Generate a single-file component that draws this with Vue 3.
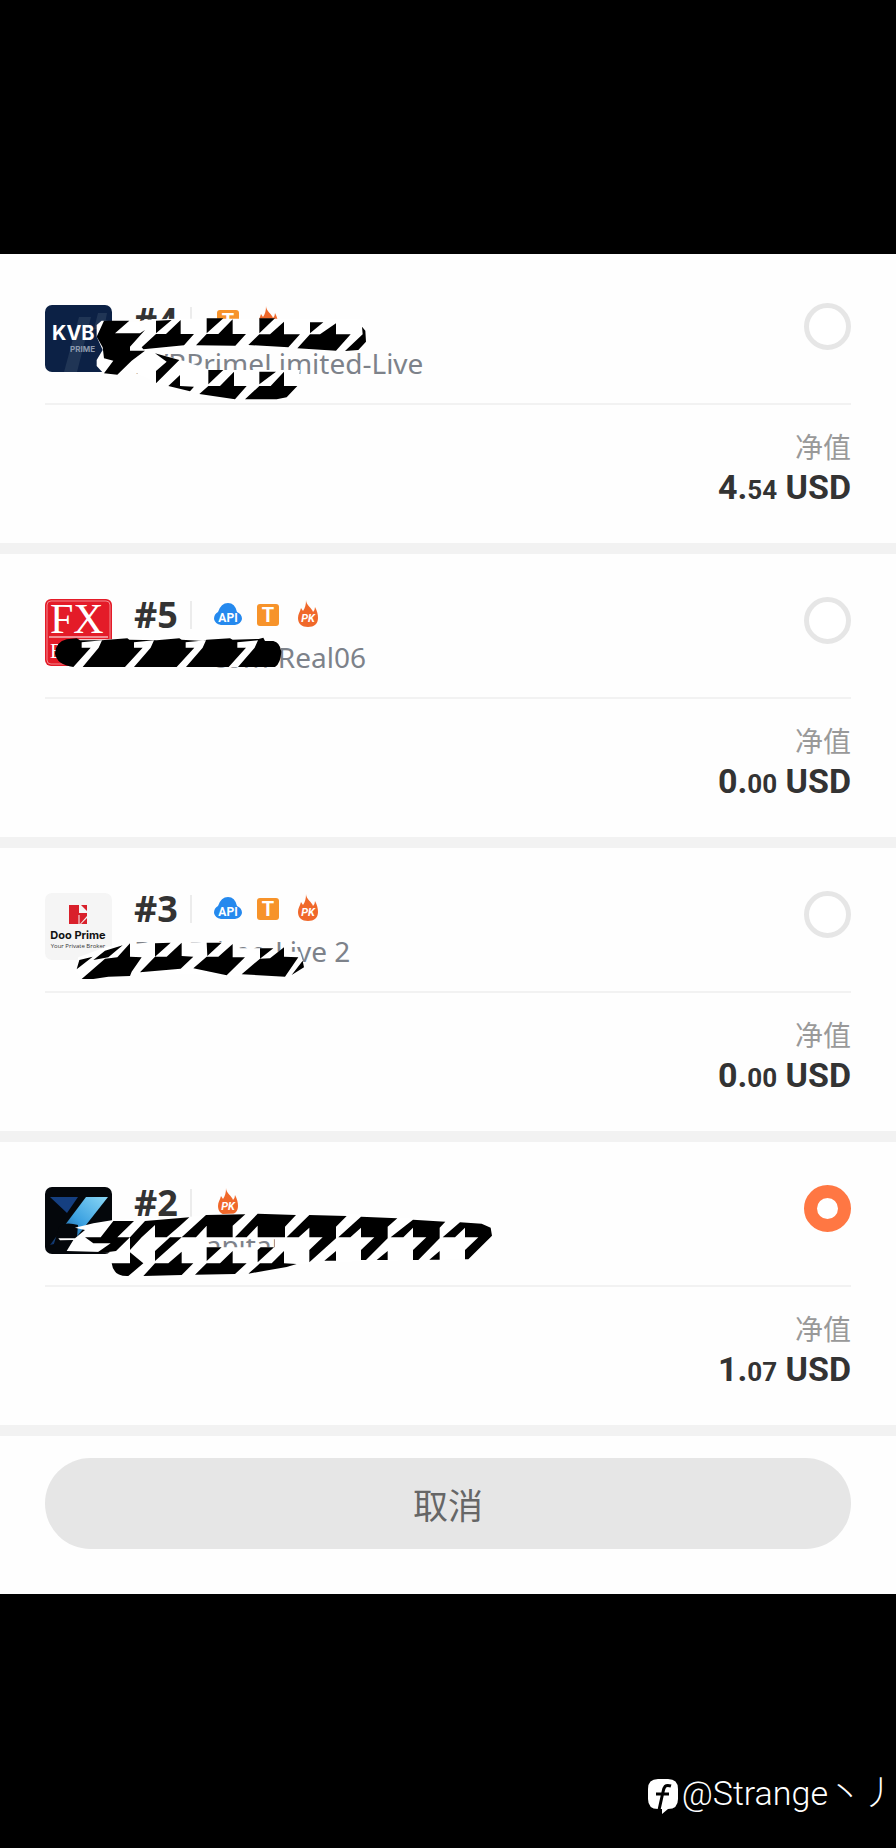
<script setup>
import { ref } from 'vue'

const selected = ref(2)

const accounts = [
  {
    id: 4, logo: 'kvb', server: 'KVBPrimeLimited-Live', tags: ['t', 'pk'], whole: '4', cents: '54', shift: 0,
    mask: 'M215 92 L320 96 L345 89 L435 86 L1000 86 L1010 150 L980 184 L640 174 L500 168 L345 180 L470 215 L540 240 L810 240 L800 300 L760 330 L600 328 L480 305 L380 278 L300 240 L265 250 L220 250 L200 228 L200 210 L218 180 L200 140 L200 105 Z',
    ink: 'M222 92 L298 92 L255 130 L330 130 L345 120 L300 170 L300 182 L345 182 L305 212 L262 254 L222 250 L250 212 L222 205 L218 172 L200 140 Z M378 92 L425 90 L378 130 Z M378 132 L408 132 L452 90 L452 132 L492 132 L462 166 L340 178 L335 172 L378 132 Z M530 85 L580 85 L530 130 Z M530 132 L565 132 L608 88 L608 132 L648 132 L616 167 L498 166 Z M688 85 L735 85 L688 130 Z M688 133 L720 133 L762 95 L762 133 L810 133 L775 172 L655 165 Z M840 97 L880 97 L840 130 Z M840 133 L870 133 L918 100 L918 133 L962 133 L918 182 L802 175 Z M996 110 L1006 122 L1008 155 L985 180 L945 183 L998 133 Z M375 190 L448 210 L400 258 L378 280 L378 243 L410 215 Z M415 288 L450 255 L450 288 L492 290 L480 304 Z M535 240 L580 240 L535 283 Z M535 288 L570 288 L612 245 L612 288 L650 288 L615 328 L508 312 Z M688 245 L738 245 L688 283 Z M688 288 L722 288 L762 245 L762 288 L802 288 L770 322 L740 328 L645 328 Z'
  },
  {
    id: 5, logo: 'fx', server: 'com-Real06', tags: ['api', 't', 'pk'], whole: '0', cents: '00', shift: 3,
    mask: 'M145 163 H690 Q750 165 753 195 Q750 240 735 247 H130 Z',
    ink: 'M110 163 Q78 170 75 205 Q80 240 130 246 H735 Q752 235 754 200 Q750 172 730 168 L705 168 L700 158 L686 162 L608 164 L600 160 L530 164 L520 168 L455 164 L448 160 L380 166 L298 164 L292 160 L215 166 L150 166 L140 160 Z',
    cuts: 'M155 172 L216 166 L206 188 L158 246 L130 246 L182 188 H155 Z M312 172 L372 166 L362 188 L312 246 L285 246 L338 188 H312 Z M467 172 L528 166 L518 188 L468 246 L440 246 L493 188 H467 Z M622 172 L684 166 L674 188 L624 246 L596 246 L648 188 H622 Z'
  },
  {
    id: 3, logo: 'doo', server: 'DooPrime-Live 2', tags: ['api', 't', 'pk'], whole: '0', cents: '00', shift: 6,
    mask: 'M135 270 L145 232 L230 200 L345 188 L600 186 L630 205 L710 205 L740 215 L810 215 L824 260 L790 286 L600 287 L380 278 L160 298 Z',
    ink: 'M140 268 L148 240 L188 230 Z M155 297 L225 236 L262 232 L300 190 L300 230 L335 232 L305 275 L300 288 L235 290 L190 297 Z M225 212 L278 196 L235 232 L190 240 Z M375 190 L422 188 L375 230 Z M375 230 L410 230 L455 188 L455 228 L490 230 L452 266 L330 277 Z M530 188 L575 188 L532 228 Z M530 230 L565 230 L608 192 L608 232 L645 232 L590 286 L490 265 Z M690 205 L730 205 L690 236 Z M690 236 L720 235 L762 202 L762 230 L805 232 L765 290 L635 283 Z M818 242 L822 262 L785 285 Z'
  },
  {
    id: 2, logo: 'capital', server: 'Capital', tags: ['pk'], whole: '1', cents: '07', shift: 9,
    mask: 'M85 190 L135 190 L165 165 L135 158 L190 145 L250 135 L480 125 L560 118 L700 112 L980 118 L1385 150 L1388 180 L1315 252 L930 260 L800 268 L690 290 L480 300 L260 305 L240 232 L110 228 L130 195 L90 196 Z M532 193 V217 H735 V193 Z',
    ink: 'M165 187 L212 187 L250 138 L312 138 L262 187 H300 L258 228 L230 232 L200 234 L242 205 L190 205 Z M345 138 L478 127 L450 152 L410 187 L375 187 V150 L335 187 L300 225 V187 Z M455 187 L528 120 L646 118 L608 152 V187 H530 V152 L498 187 Z M615 187 L683 116 L798 120 L765 155 V187 H683 V152 L650 187 Z M375 258 V228 L420 187 H455 Z M530 258 V217 H575 Z M245 265 H300 V232 L340 265 L295 303 Q250 305 245 265 Z M340 303 L375 265 H415 L455 230 V265 H490 L455 300 Z M495 299 L530 265 H570 L608 228 V265 H650 L615 297 Z M655 296 L690 265 L725 265 L762 228 V265 L800 267 L770 276 Z M683 262 V225 L692 217 H732 Z M838 120 L950 123 L918 155 V190 L838 262 V225 L878 187 H838 V158 L806 187 H770 Z M918 228 V257 H883 Z M993 125 L1102 130 L1073 155 V190 L1008 255 H993 V225 L1033 187 H993 V158 L961 187 H925 Z M1073 228 V255 H1040 Z M1149 134 L1246 140 L1229 158 V190 L1165 255 H1149 V225 L1189 187 H1149 V158 L1120 187 H1082 Z M1229 228 V254 H1198 Z M1290 142 L1355 146 L1382 158 L1386 182 L1315 253 H1305 V225 L1345 187 H1305 V158 L1275 187 H1238 Z'
  }
]
</script>

<template>
  <main class="page">
    <form class="sheet" @submit.prevent>
      <section v-for="a in accounts" :key="a.id" class="card">
        <div class="head">
          <svg v-if="a.logo === 'kvb'" class="logo" viewBox="0 0 67 67" role="img" aria-label="KVB Prime">
            <rect width="67" height="67" rx="7" fill="#0c2145" />
            <path d="M34 12 H46 L32 67 H19 Z M53 8 H62 L59 24 H49 Z" fill="#203555" />
            <text x="7" y="35" class="kvb">KVB</text>
            <text x="25" y="47" class="kvb-sub">PRIME</text>
          </svg>
          <svg v-else-if="a.logo === 'fx'" class="logo" viewBox="0 0 67 67" role="img" aria-label="FX">
            <rect width="67" height="67" rx="6" fill="#e41b28" />
            <rect x="2" y="2" width="63" height="63" rx="4" fill="none" stroke="#f28a8f" />
            <text x="5" y="34" class="fx">FX</text>
            <text x="5" y="59" class="fx-sub">B</text>
            <path d="M4 38 H63" stroke="#ffffff" stroke-width="1" />
          </svg>
          <svg v-else-if="a.logo === 'doo'" class="logo" viewBox="0 0 67 67" role="img" aria-label="Doo Prime">
            <rect width="67" height="67" rx="7" fill="#f5f5f5" />
            <path d="M24 12 H34 V20 H42 V23 L35 31 H24 Z" fill="#d9202b" />
            <path d="M36 12 L42 18 V12 Z M42 25 V31 H36 Z" fill="#d9202b" />
            <path d="M34 22 V31" fill="none" stroke="#f5f5f5" />
            <text x="33" y="46" text-anchor="middle" class="doo">Doo Prime</text>
            <text x="33" y="55" text-anchor="middle" class="doo-sub">Your Private Broker</text>
          </svg>
          <svg v-else class="logo" viewBox="0 0 67 67" role="img" aria-label="Capital">
            <defs>
              <linearGradient id="beam" x1="1" y1="0" x2="0" y2="1">
                <stop offset="0" stop-color="#8bd8f6" />
                <stop offset="0.5" stop-color="#3aa0e0" />
                <stop offset="1" stop-color="#0d2c63" />
              </linearGradient>
            </defs>
            <rect width="67" height="67" rx="7" fill="#04070b" />
            <path d="M5 10 H33 L22 26 Z" fill="#153f80" />
            <path d="M41 10 H63 L30 52 L5 58 Z" fill="url(#beam)" />
            <path d="M14 40 Q20 34 33 38 L32 50 H58 L48 60 H8 Z" fill="#04070b" />
          </svg>

          <div class="info">
            <div class="title-row">
              <label class="title" :for="'account-' + a.id">#{{ a.id }}</label>
              <div class="tags">
                <template v-for="t in a.tags" :key="t">
                  <svg v-if="t === 'api'" class="tag" viewBox="0 0 28 28" role="img" aria-label="API">
                    <path d="M7 25 Q1 24 0 19 Q0 14 4 12 Q7 3 14 3 Q21 3 23 12 Q28 14 28 19 Q27 24 21 25 Z" fill="#2589ee" />
                    <text x="14" y="22" text-anchor="middle" class="api">API</text>
                  </svg>
                  <svg v-else-if="t === 't'" class="tag" viewBox="0 0 28 28" role="img" aria-label="T">
                    <rect x="3" y="4" width="22" height="22" rx="3" fill="#f7932a" />
                    <text x="14" y="22" text-anchor="middle" class="t">T</text>
                  </svg>
                  <svg v-else class="tag" viewBox="0 0 28 28" role="img" aria-label="PK">
                    <path d="M12 0 C12 5 18 8 19 12 Q21 10 21 7 C23 11 24 14 24 18 C24 24 20 27 14 27 C8 27 4 24 4 18 C4 14 6 12 7 8 L9 11 C11 8 12 5 12 0 Z" fill="#f0682a" />
                    <text x="14" y="22" text-anchor="middle" class="pk">PK</text>
                  </svg>
                </template>
              </div>
            </div>
            <p class="server" :class="'server-' + a.logo">{{ a.server }}</p>
          </div>

          <input :id="'account-' + a.id" v-model="selected" class="radio" type="radio" name="account" :value="a.id" />
        </div>

        <div class="equity">
          <span class="label">净值</span>
          <strong class="value">{{ a.whole }}.<small>{{ a.cents }}</small> USD</strong>
        </div>

        <svg class="scribble" :viewBox="`0 ${-a.shift} 1440 360`" aria-hidden="true">
          <path :d="a.mask" fill="#ffffff" fill-rule="evenodd" />
          <path :d="a.ink" fill="#000000" />
          <path v-if="a.cuts" :d="a.cuts" fill="#ffffff" />
        </svg>
      </section>

      <div class="actions">
        <button type="button" class="cancel">取消</button>
      </div>
    </form>

    <footer class="credit">
      <svg class="mark" viewBox="0 0 30 36" aria-hidden="true">
        <path d="M10 0 H20 Q30 0 30 10 V20 Q30 30 20 30 L14 35 V30 H10 Q0 30 0 20 V10 Q0 0 10 0 Z" fill="#ffffff" />
        <path d="M23 7 C17 5 16 8 15 13 L11 31 M8 15 H21" fill="none" stroke="#000000" stroke-width="3" />
      </svg>
      <span>@Strange丶丿</span>
    </footer>
  </main>
</template>

<style>
body {
  margin: 0;
  background: #000000;
}
</style>

<style scoped>
.page {
  box-sizing: border-box;
  min-height: 100vh;
  padding-top: 254px;
  display: flex;
  flex-direction: column;
  background: #000000;
  font-family: "Noto Sans", "Noto Sans CJK SC", sans-serif;
}
.sheet {
  padding-top: 6px;
  background: #fefefe;
}
.card {
  position: relative;
  padding: 43px 45px 32px;
  border-bottom: 11px solid #f2f2f2;
}
.head {
  display: flex;
  align-items: flex-start;
  box-sizing: border-box;
  height: 102px;
  border-bottom: 2px solid #f2f2f2;
}
.logo {
  flex: none;
  width: 67px;
  height: 67px;
  margin-top: 2px;
}
.info {
  flex: 1;
  min-width: 0;
  padding-left: 22px;
}
.title-row {
  display: flex;
  align-items: center;
  height: 36px;
}
.title {
  box-sizing: border-box;
  width: 58px;
  height: 28px;
  border-right: 2px solid #ececec;
  font-size: 36px;
  font-weight: 700;
  line-height: 28px;
  color: #333333;
}
.tags {
  display: flex;
  gap: 12px;
  padding: 0 0 2px 22px;
}
.tag {
  width: 28px;
  height: 28px;
}
.server {
  margin: 6px 0 0;
  font-size: 28px;
  line-height: 36px;
  white-space: nowrap;
  color: #7d828a;
}
.server-fx {
  width: 232px;
  text-align: right;
}
.server-capital {
  padding-left: 54px;
}
.radio {
  appearance: none;
  flex: none;
  box-sizing: border-box;
  width: 47px;
  height: 47px;
  margin: 0;
  border: 5px solid #e6e6e6;
  border-radius: 50%;
  background: #ffffff;
}
.radio:checked {
  border: 13px solid #ff7743;
}
.equity {
  display: flex;
  flex-direction: column;
  align-items: flex-end;
  gap: 3px;
  padding-top: 23px;
}
.label {
  font-family: "Noto Sans CJK SC", sans-serif;
  font-size: 28px;
  line-height: 36px;
  color: #999999;
}
.value {
  font-family: Roboto, sans-serif;
  font-size: 34px;
  font-weight: 700;
  line-height: 41px;
  color: #333333;
}
.value small {
  font-size: 26px;
}
.scribble {
  position: absolute;
  top: 30px;
  left: 30px;
  width: 480px;
  height: 120px;
  pointer-events: none;
}
.actions {
  padding: 22px 45px 45px;
}
.cancel {
  display: block;
  width: 100%;
  height: 91px;
  border: 0;
  border-radius: 46px;
  background: #e6e6e6;
  font-family: "Noto Sans CJK SC", sans-serif;
  font-size: 35px;
  color: #666666;
}
.credit {
  flex: 1;
  display: flex;
  align-items: flex-end;
  justify-content: flex-end;
  gap: 4px;
  padding-bottom: 33px;
  font-family: Roboto, "Noto Sans CJK SC", sans-serif;
  font-size: 34px;
  font-weight: 300;
  line-height: 44px;
  white-space: nowrap;
  color: #ffffff;
}
.mark {
  width: 30px;
  height: 36px;
}
.kvb {
  font: 700 20px Inter, sans-serif;
  fill: #ffffff;
}
.kvb-sub {
  font: 700 8px Inter, sans-serif;
  fill: #8c99ad;
}
.fx {
  font: 400 42px "Liberation Serif", serif;
  fill: #ffffff;
}
.fx-sub {
  font: 400 20px "Liberation Serif", serif;
  fill: #ffffff;
}
.doo {
  font: 700 11px Inter, sans-serif;
  fill: #111111;
}
.doo-sub {
  font: 400 6px "Open Sans", sans-serif;
  fill: #333333;
}
.api {
  font: 700 12px Roboto, sans-serif;
  fill: #ffffff;
}
.t {
  font: 700 20px Roboto, sans-serif;
  fill: #ffffff;
}
.pk {
  font: italic 700 11px Roboto, sans-serif;
  fill: #ffffff;
}
</style>
